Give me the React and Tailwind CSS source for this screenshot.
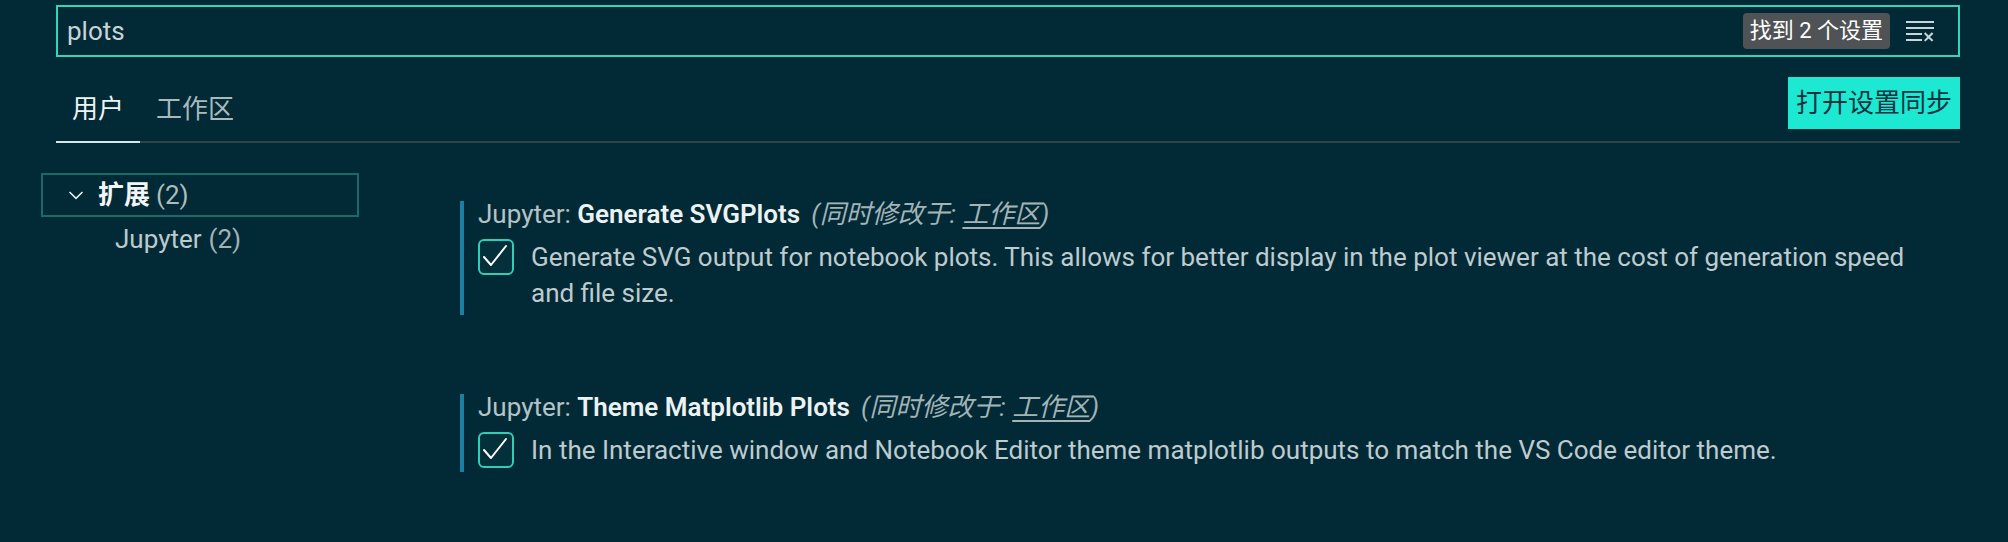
export default function App() {
  const font = "font-['Roboto','Noto_Sans_CJK_SC',sans-serif]";
  return (
    <div className={"w-[2008px] h-[542px] overflow-hidden bg-[#012a36] text-[#c3cfd2] " + font}>
      {/* search */}
      <div className="pt-[5px] pl-[56px] pr-[48px]">
        <div className="h-[52px] border-2 border-[#34d3bb] flex items-center pl-[9px] pr-[22px]">
          <span className="flex-1 text-[26px] leading-none text-[#c9d4d6]">plots</span>
          <span className="h-[36px] px-[7px] rounded-[4px] bg-[#4f5355] text-white text-[22px] leading-[36px] whitespace-nowrap">
            找到 2 个设置
          </span>
          <svg className="ml-[14px] w-[32px] h-[32px]" viewBox="0 0 16 16" fill="#c6d6da">
            <path d="M10 12.6l.7.7 1.6-1.6 1.6 1.6.8-.7L13 11l1.7-1.6-.8-.8-1.6 1.7-1.6-1.7-.7.8 1.6 1.6-1.6 1.6zM1 4h14V3H1v1zm0 3h14V6H1v1zm8 2.5V9H1v1h8v-.5zM9 13v-1H1v1h8z" />
          </svg>
        </div>
      </div>

      {/* tabs row */}
      <div className="mt-[20px] ml-[56px] mr-[48px] flex justify-between items-end border-b-2 border-[#2f4448]">
        <div className="flex self-stretch">
          <div className="px-[16px] flex items-center -mb-[2px] border-b-2 border-[#d3e7eb] text-[26px] text-[#eef4f4]">
            用户
          </div>
          <div className="px-[16px] flex items-center text-[26px] text-[#a9b9bc]">工作区</div>
        </div>
        <button className="mb-[12px] h-[52px] w-[172px] bg-[#1de9d2] text-[#0b3440] text-[26px] leading-[52px] text-center">
          打开设置同步
        </button>
      </div>

      {/* body */}
      <div className="flex pt-[30px]">
        {/* tree */}
        <div className="ml-[41px] w-[318px] flex flex-col">
          <div className="h-[44px] border-2 border-[#1b6a64] flex items-center pl-[25px]">
            <svg className="w-[16px] h-[10px]" viewBox="0 0 16 10" fill="none" stroke="#e6eeee" strokeWidth="1.6">
              <polyline points="1.5,2 8,8.3 14.5,2" />
            </svg>
            <span className="ml-[14px] text-[26px] font-bold text-[#f2f6f6]">扩展</span>
            <span className="ml-[6px] text-[26px] text-[#aebcbf]">(2)</span>
          </div>
          <div className="h-[44px] flex items-center pl-[74px] text-[26px]">
            <span className="text-[#bccacd]">Jupyter</span>
            <span className="ml-[7px] text-[#a3b2b5]">(2)</span>
          </div>
        </div>

        {/* settings list */}
        <div className="ml-[101px] mt-[28px] w-[1470px] flex flex-col">
          <Setting
            name="Generate SVGPlots"
            desc="Generate SVG output for notebook plots. This allows for better display in the plot viewer at the cost of generation speed and file size."
          />
          <div className="mt-[79px]">
            <Setting
              name="Theme Matplotlib Plots"
              desc="In the Interactive window and Notebook Editor theme matplotlib outputs to match the VS Code editor theme."
            />
          </div>
        </div>
      </div>
    </div>
  );
}

function Setting({ name, desc }) {
  return (
    <div className="border-l-4 border-[#1b7fa3] pl-[14px] pb-[4px]">
      <div className="h-[26px] text-[26px] leading-[26px] whitespace-nowrap flex items-center">
        <span className="text-[#b5c3c6]">Jupyter:&nbsp;</span>
        <span className="font-semibold text-[#ecf2f2]">{name}</span>
        <span className="ml-[11px] italic text-[#a3b3b6]">
          (同时修改于: <span className="underline underline-offset-[4px]">工作区</span>)
        </span>
      </div>
      <div className="mt-[12px] flex items-start">
        <div className="shrink-0 w-[36px] h-[36px] rounded-[6px] border-2 border-[#2fcfb7] bg-[#03303b] flex items-center justify-center">
          <svg className="w-[32px] h-[32px]" viewBox="0 0 32 32" fill="none" stroke="#ffffff" strokeWidth="2" strokeLinecap="round" strokeLinejoin="round">
            <polyline points="4,16 11,24 26,5" />
          </svg>
        </div>
        <p className="ml-[17px] text-[26px] leading-[36px] text-[#bfcbce]">{desc}</p>
      </div>
    </div>
  );
}
